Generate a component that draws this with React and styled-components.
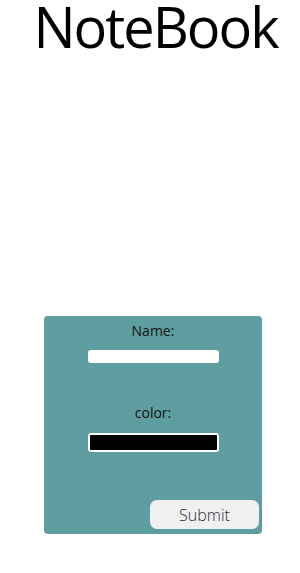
import React from "react";
import styled, { createGlobalStyle } from "styled-components";

const Global = createGlobalStyle`
  html, body { margin: 0; padding: 0; background: #fff; }
  body { font-family: "Open Sans", "Noto Sans", sans-serif; }
`;

const Page = styled.div`
  display: flex;
  flex-direction: column;
  align-items: center;
  width: 300px;
  min-height: 573px;
`;

const Title = styled.h1`
  margin: 0 0 0 11px;
  font-size: 56px;
  line-height: 52px;
  letter-spacing: -2px;
  font-weight: 400;
  color: #000;
  white-space: nowrap;
`;

const Form = styled.form`
  margin: 264px 0 0 6px;
  width: 218px;
  height: 218px;
  box-sizing: border-box;
  background: #5f9ea0;
  border-radius: 4px;
  padding: 5px 3px 5px 0;
  display: flex;
  flex-direction: column;
  align-items: center;
`;

const Label = styled.label`
  font-size: 14px;
  line-height: 20px;
  color: #111;
  margin-top: ${(p) => p.$top}px;
  padding-left: 3px;
`;

const TextInput = styled.input`
  margin: 9px 0 0 3px;
  width: 131px;
  height: 13px;
  box-sizing: border-box;
  border: none;
  border-radius: 3px;
  background: #fff;
  padding: 0;
  outline: none;
`;

const ColorInput = styled.input`
  -webkit-appearance: none;
  appearance: none;
  margin: 10px 0 0 3px;
  width: 131px;
  height: 19px;
  box-sizing: border-box;
  border: 2px solid #fff;
  border-radius: 3px;
  background: #000;
  padding: 0;
  cursor: pointer;
  &::-webkit-color-swatch-wrapper { padding: 0; }
  &::-webkit-color-swatch { border: none; border-radius: 1px; }
`;

const Submit = styled.button`
  margin-top: auto;
  align-self: flex-end;
  width: 109px;
  height: 29px;
  border: none;
  border-radius: 7px;
  background: #f0f0f0;
  font-family: "Open Sans", sans-serif;
  font-size: 16px;
  font-weight: 300;
  color: #2f2838;
  padding: 0;
`;

export default function App() {
  return (
    <>
      <Global />
      <Page>
        <Title>NoteBook</Title>
        <Form onSubmit={(e) => e.preventDefault()}>
          <Label $top={0} htmlFor="name">Name:</Label>
          <TextInput id="name" type="text" />
          <Label $top={40} htmlFor="color">color:</Label>
          <ColorInput id="color" type="color" defaultValue="#000000" />
          <Submit type="submit">Submit</Submit>
        </Form>
      </Page>
    </>
  );
}
